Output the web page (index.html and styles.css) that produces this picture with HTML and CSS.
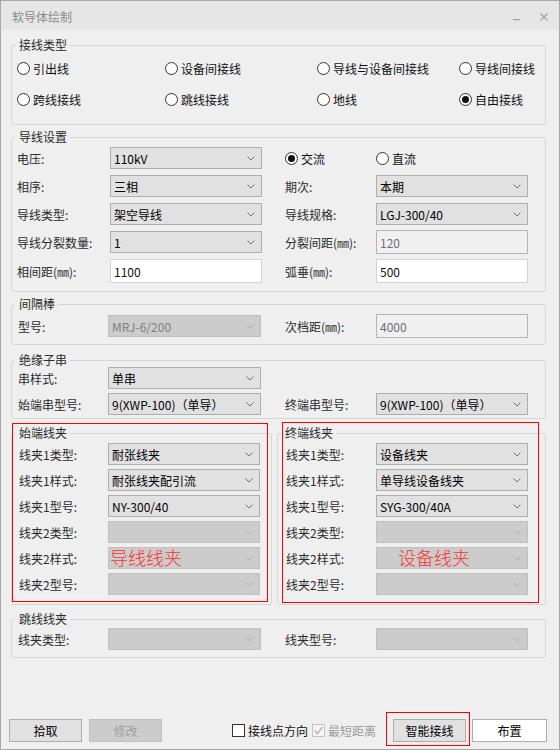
FILE: index.html
```html
<!DOCTYPE html>
<html lang="zh-CN">
<head>
<meta charset="utf-8">
<title>软导体绘制</title>
<link rel="stylesheet" href="styles.css">
</head>
<body>
<div class="window">
  <div class="titlebar">
    <span class="title">软导体绘制</span>
    <span class="wctl">
      <svg class="min" width="8" height="3" viewBox="0 0 8 3"><rect x="0" y="1" width="7" height="1.2" fill="#a0a0a0"/></svg>
      <svg class="close" width="8" height="8" viewBox="0 0 8 8"><path d="M0.5 0.5 L7.5 7.5 M7.5 0.5 L0.5 7.5" stroke="#a0a0a0" stroke-width="1.1" fill="none"/></svg>
    </span>
  </div>

  <div class="content">
    <fieldset class="grp">
      <legend>接线类型</legend>
      <div class="radios">
        <label class="radio"><i class="dot"></i>引出线</label>
        <label class="radio"><i class="dot"></i>设备间接线</label>
        <label class="radio"><i class="dot"></i>导线与设备间接线</label>
        <label class="radio"><i class="dot"></i>导线间接线</label>
        <label class="radio"><i class="dot"></i>跨线接线</label>
        <label class="radio"><i class="dot"></i>跳线接线</label>
        <label class="radio"><i class="dot"></i>地线</label>
        <label class="radio"><i class="dot on"></i>自由接线</label>
      </div>
    </fieldset>

    <fieldset class="grp g2">
      <legend>导线设置</legend>
      <div class="form f2">
        <span class="lbl">电压:</span>
        <div class="combo"><span>110kV</span><svg width="8" height="5" viewBox="0 0 8 5"><polyline points="0.5,0.5 4,4 7.5,0.5" fill="none" stroke="#707070"/></svg></div>
        <label class="radio"><i class="dot on"></i>交流</label>
        <label class="radio"><i class="dot"></i>直流</label>

        <span class="lbl">相序:</span>
        <div class="combo"><span>三相</span><svg width="8" height="5" viewBox="0 0 8 5"><polyline points="0.5,0.5 4,4 7.5,0.5" fill="none" stroke="#707070"/></svg></div>
        <span class="lbl">期次:</span>
        <div class="combo"><span>本期</span><svg width="8" height="5" viewBox="0 0 8 5"><polyline points="0.5,0.5 4,4 7.5,0.5" fill="none" stroke="#707070"/></svg></div>

        <span class="lbl">导线类型:</span>
        <div class="combo"><span>架空导线</span><svg width="8" height="5" viewBox="0 0 8 5"><polyline points="0.5,0.5 4,4 7.5,0.5" fill="none" stroke="#707070"/></svg></div>
        <span class="lbl">导线规格:</span>
        <div class="combo"><span>LGJ-300/40</span><svg width="8" height="5" viewBox="0 0 8 5"><polyline points="0.5,0.5 4,4 7.5,0.5" fill="none" stroke="#707070"/></svg></div>

        <span class="lbl">导线分裂数量:</span>
        <div class="combo"><span>1</span><svg width="8" height="5" viewBox="0 0 8 5"><polyline points="0.5,0.5 4,4 7.5,0.5" fill="none" stroke="#707070"/></svg></div>
        <span class="lbl">分裂间距(㎜):</span>
        <div class="input dis">120</div>

        <span class="lbl">相间距(㎜):</span>
        <div class="input">1100</div>
        <span class="lbl">弧垂(㎜):</span>
        <div class="input">500</div>
      </div>
    </fieldset>

    <fieldset class="grp g3">
      <legend>间隔棒</legend>
      <div class="form f3">
        <span class="lbl">型号:</span>
        <div class="combo off wide"><span>MRJ-6/200</span><svg width="8" height="5" viewBox="0 0 8 5"><polyline points="0.5,0.5 4,4 7.5,0.5" fill="none" stroke="#b0b0b0"/></svg></div>
        <span class="lbl">次档距(㎜):</span>
        <div class="input dis">4000</div>
      </div>
    </fieldset>

    <fieldset class="grp g4">
      <legend>绝缘子串</legend>
      <div class="form f4">
        <span class="lbl">串样式:</span>
        <div class="combo wide"><span>单串</span><svg width="8" height="5" viewBox="0 0 8 5"><polyline points="0.5,0.5 4,4 7.5,0.5" fill="none" stroke="#707070"/></svg></div>
        <span></span><span></span>
        <span class="lbl">始端串型号:</span>
        <div class="combo wide"><span>9(XWP-100)（单导）</span><svg width="8" height="5" viewBox="0 0 8 5"><polyline points="0.5,0.5 4,4 7.5,0.5" fill="none" stroke="#707070"/></svg></div>
        <span class="lbl">终端串型号:</span>
        <div class="combo"><span>9(XWP-100)（单导）</span><svg width="8" height="5" viewBox="0 0 8 5"><polyline points="0.5,0.5 4,4 7.5,0.5" fill="none" stroke="#707070"/></svg></div>
      </div>
    </fieldset>

    <div class="pair">
      <fieldset class="grp g5l">
        <legend>始端线夹</legend>
        <div class="form f5l">
          <span class="lbl">线夹1类型:</span>
          <div class="combo"><span>耐张线夹</span><svg width="8" height="5" viewBox="0 0 8 5"><polyline points="0.5,0.5 4,4 7.5,0.5" fill="none" stroke="#707070"/></svg></div>
          <span class="lbl">线夹1样式:</span>
          <div class="combo"><span>耐张线夹配引流</span><svg width="8" height="5" viewBox="0 0 8 5"><polyline points="0.5,0.5 4,4 7.5,0.5" fill="none" stroke="#707070"/></svg></div>
          <span class="lbl">线夹1型号:</span>
          <div class="combo"><span>NY-300/40</span><svg width="8" height="5" viewBox="0 0 8 5"><polyline points="0.5,0.5 4,4 7.5,0.5" fill="none" stroke="#707070"/></svg></div>
          <span class="lbl">线夹2类型:</span>
          <div class="combo off"><span></span><svg width="8" height="5" viewBox="0 0 8 5"><polyline points="0.5,0.5 4,4 7.5,0.5" fill="none" stroke="#b0b0b0"/></svg></div>
          <span class="lbl">线夹2样式:</span>
          <div class="combo off"><span></span><svg width="8" height="5" viewBox="0 0 8 5"><polyline points="0.5,0.5 4,4 7.5,0.5" fill="none" stroke="#b0b0b0"/></svg></div>
          <span class="lbl">线夹2型号:</span>
          <div class="combo off"><span></span><svg width="8" height="5" viewBox="0 0 8 5"><polyline points="0.5,0.5 4,4 7.5,0.5" fill="none" stroke="#b0b0b0"/></svg></div>
        </div>
      </fieldset>
      <fieldset class="grp g5r">
        <legend>终端线夹</legend>
        <div class="form f5r">
          <span class="lbl">线夹1类型:</span>
          <div class="combo"><span>设备线夹</span><svg width="8" height="5" viewBox="0 0 8 5"><polyline points="0.5,0.5 4,4 7.5,0.5" fill="none" stroke="#707070"/></svg></div>
          <span class="lbl">线夹1样式:</span>
          <div class="combo"><span>单导线设备线夹</span><svg width="8" height="5" viewBox="0 0 8 5"><polyline points="0.5,0.5 4,4 7.5,0.5" fill="none" stroke="#707070"/></svg></div>
          <span class="lbl">线夹1型号:</span>
          <div class="combo"><span>SYG-300/40A</span><svg width="8" height="5" viewBox="0 0 8 5"><polyline points="0.5,0.5 4,4 7.5,0.5" fill="none" stroke="#707070"/></svg></div>
          <span class="lbl">线夹2类型:</span>
          <div class="combo off"><span></span><svg width="8" height="5" viewBox="0 0 8 5"><polyline points="0.5,0.5 4,4 7.5,0.5" fill="none" stroke="#b0b0b0"/></svg></div>
          <span class="lbl">线夹2样式:</span>
          <div class="combo off"><span></span><svg width="8" height="5" viewBox="0 0 8 5"><polyline points="0.5,0.5 4,4 7.5,0.5" fill="none" stroke="#b0b0b0"/></svg></div>
          <span class="lbl">线夹2型号:</span>
          <div class="combo off"><span></span><svg width="8" height="5" viewBox="0 0 8 5"><polyline points="0.5,0.5 4,4 7.5,0.5" fill="none" stroke="#b0b0b0"/></svg></div>
        </div>
      </fieldset>
      <span class="mark mark-l"></span>
      <span class="mark mark-r"></span>
      <span class="note note-l">导线线夹</span>
      <span class="note note-r">设备线夹</span>
    </div>

    <fieldset class="grp g6">
      <legend>跳线线夹</legend>
      <div class="form f6">
        <span class="lbl">线夹类型:</span>
        <div class="combo off wide"><span></span><svg width="8" height="5" viewBox="0 0 8 5"><polyline points="0.5,0.5 4,4 7.5,0.5" fill="none" stroke="#b0b0b0"/></svg></div>
        <span class="lbl">线夹型号:</span>
        <div class="combo off"><span></span><svg width="8" height="5" viewBox="0 0 8 5"><polyline points="0.5,0.5 4,4 7.5,0.5" fill="none" stroke="#b0b0b0"/></svg></div>
      </div>
    </fieldset>
  </div>

  <div class="footer">
    <button class="btn">拾取</button>
    <button class="btn off b2">修改</button>
    <label class="chk c1"><i class="box"></i>接线点方向</label>
    <label class="chk c2 off"><i class="box"><svg width="11" height="11" viewBox="0 0 11 11"><polyline points="1.5,5.5 4.5,8.5 9.5,2" fill="none" stroke="#b8b8b8" stroke-width="1.6"/></svg></i>最短距离</label>
    <button class="btn hl">智能接线</button>
    <button class="btn white">布置</button>
  </div>
</div>
</body>
</html>
```

FILE: styles.css
```css
html, body {
  margin: 0;
  padding: 0;
}
body {
  font-family: "Noto Sans CJK SC", "Noto Sans", sans-serif;
  font-size: 12px;
  color: #1a1a1a;
}
.window {
  width: 560px;
  height: 750px;
  box-sizing: border-box;
  border: 1px solid #a8a8a8;
  background: #efefef;
  display: flex;
  flex-direction: column;
}
.titlebar {
  height: 29px;
  flex: none;
  background: #e6e6e6;
  display: flex;
  align-items: center;
  padding: 2px 0 0 11px;
  box-sizing: border-box;
  color: #8a8a8a;
}
.wctl {
  margin-left: auto;
  display: flex;
  align-items: center;
  gap: 19px;
  padding-right: 11px;
}
.wctl .min { margin-top: 6px; }

.content {
  padding: 8px 13px 0 10px;
}
.grp {
  margin: 0;
  padding: 0;
  border: 1px solid #d6d6d6;
  border-radius: 3px;
  min-width: 0;
}
.grp legend {
  padding: 0 3px 0 4px;
  margin-left: 3px;
  line-height: 14px;
  color: #2a2a2a;
}
.g2 { margin-top: 5px; }
.g3 { margin-top: 5px; }
.g4 { margin-top: 8px; }
.pair { margin-top: 7px; }
.g6 { margin-top: 7px; }

/* radios */
.radios {
  display: grid;
  grid-template-columns: 148px 152px 142px auto;
  grid-auto-rows: 20px;
  row-gap: 11px;
  padding: 6px 0 15px 5px;
}
.radio {
  display: flex;
  align-items: center;
  gap: 3px;
  white-space: nowrap;
  color: #111;
}
.dot {
  width: 13px;
  height: 13px;
  box-sizing: border-box;
  border: 1px solid #333;
  border-radius: 50%;
  background: #fff;
  display: flex;
  align-items: center;
  justify-content: center;
  flex: none;
}
.dot.on::after {
  content: "";
  width: 7px;
  height: 7px;
  border-radius: 50%;
  background: #111;
}

/* forms */
.form {
  display: grid;
  align-items: center;
}
.lbl {
  white-space: nowrap;
  color: #2b2b2b;
}
.f2 {
  grid-template-columns: 93px 175px 91px 152px;
  grid-template-rows: 22px 22px 22px 22px 24px;
  row-gap: 6px;
  padding: 3px 0 8px 5px;
}
.f3 {
  grid-template-columns: 90px 177px 91px 152px;
  grid-template-rows: 24px;
  padding: 3px 0 6px 6px;
}
.f4 {
  grid-template-columns: 90px 177px 91px 152px;
  grid-template-rows: 22px 22px;
  row-gap: 4px;
  padding: 0 0 3px 6px;
}
.f6 {
  grid-template-columns: 90px 177px 91px 152px;
  grid-template-rows: 22px;
  padding: 2px 0 7px 6px;
}
.pair {
  display: flex;
  gap: 5px;
  position: relative;
}
.g5l { width: 261px; box-sizing: border-box; }
.g5r { width: 269px; box-sizing: border-box; }
.f5l, .f5r {
  grid-auto-rows: 22px;
  row-gap: 4px;
  padding: 3px 0 9px 7px;
  grid-template-columns: 89px 152px;
}
.f5r {
  padding-left: 8px;
  grid-template-columns: 90px 152px;
}

.combo {
  width: 152px;
  height: 22px;
  box-sizing: border-box;
  border: 1px solid #adadad;
  background: #e1e1e1;
  display: flex;
  align-items: center;
  padding: 0 6px 0 3px;
  color: #000;
  white-space: nowrap;
}
.combo.wide { width: 153px; }
.combo span { flex: 1; }
.combo svg { flex: none; }
.combo.off {
  background: #cccccc;
  border-color: #bfbfbf;
  color: #808080;
}
.input {
  width: 152px;
  height: 24px;
  box-sizing: border-box;
  border: 1px solid #d3d3d3;
  background: #fff;
  display: flex;
  align-items: center;
  padding-left: 3px;
  color: #111;
}
.input.dis {
  background: #f0f0f0;
  border-color: #b4b4b4;
  color: #707070;
}

/* annotations */
.mark {
  position: absolute;
  box-sizing: border-box;
  border: 1px solid #f00;
  pointer-events: none;
}
.mark-l { left: 1px; top: -3px; width: 256px; height: 179px; }
.mark-r { left: 271px; top: -4px; width: 257px; height: 181px; }
.note {
  position: absolute;
  top: 121px;
  font-size: 18px;
  font-weight: 300;
  line-height: 20px;
  color: #ff3030;
  white-space: nowrap;
}
.note-l { left: 99px; }
.note-r { left: 387px; }

/* footer */
.footer {
  margin-top: auto;
  display: flex;
  align-items: center;
  padding: 0 0 7px 8px;
}
.btn {
  width: 73px;
  height: 23px;
  box-sizing: border-box;
  border: 1px solid #adadad;
  background: #e1e1e1;
  font: inherit;
  color: #000;
  padding: 0;
  border-radius: 0;
}
.btn.off {
  background: #cccccc;
  border-color: #bfbfbf;
  color: #a0a0a0;
}
.b2 { margin-left: 7px; }
.chk {
  display: flex;
  align-items: center;
  gap: 3px;
  white-space: nowrap;
  color: #111;
}
.c1 { margin-left: 70px; }
.c2 { margin-left: 4px; color: #9a9a9a; }
.box {
  width: 13px;
  height: 13px;
  box-sizing: border-box;
  border: 1px solid #333;
  background: #fff;
  display: flex;
  align-items: center;
  justify-content: center;
}
.c2 .box {
  border-color: #c4c4c4;
  background: #f4f4f4;
}
.hl {
  margin-left: 17px;
  position: relative;
}
.hl::after {
  content: "";
  position: absolute;
  left: -8px;
  top: -8px;
  width: 84px;
  height: 34px;
  box-sizing: border-box;
  border: 1px solid #f00;
}
.white {
  margin-left: 6px;
  width: 75px;
  background: #fff;
}
```
